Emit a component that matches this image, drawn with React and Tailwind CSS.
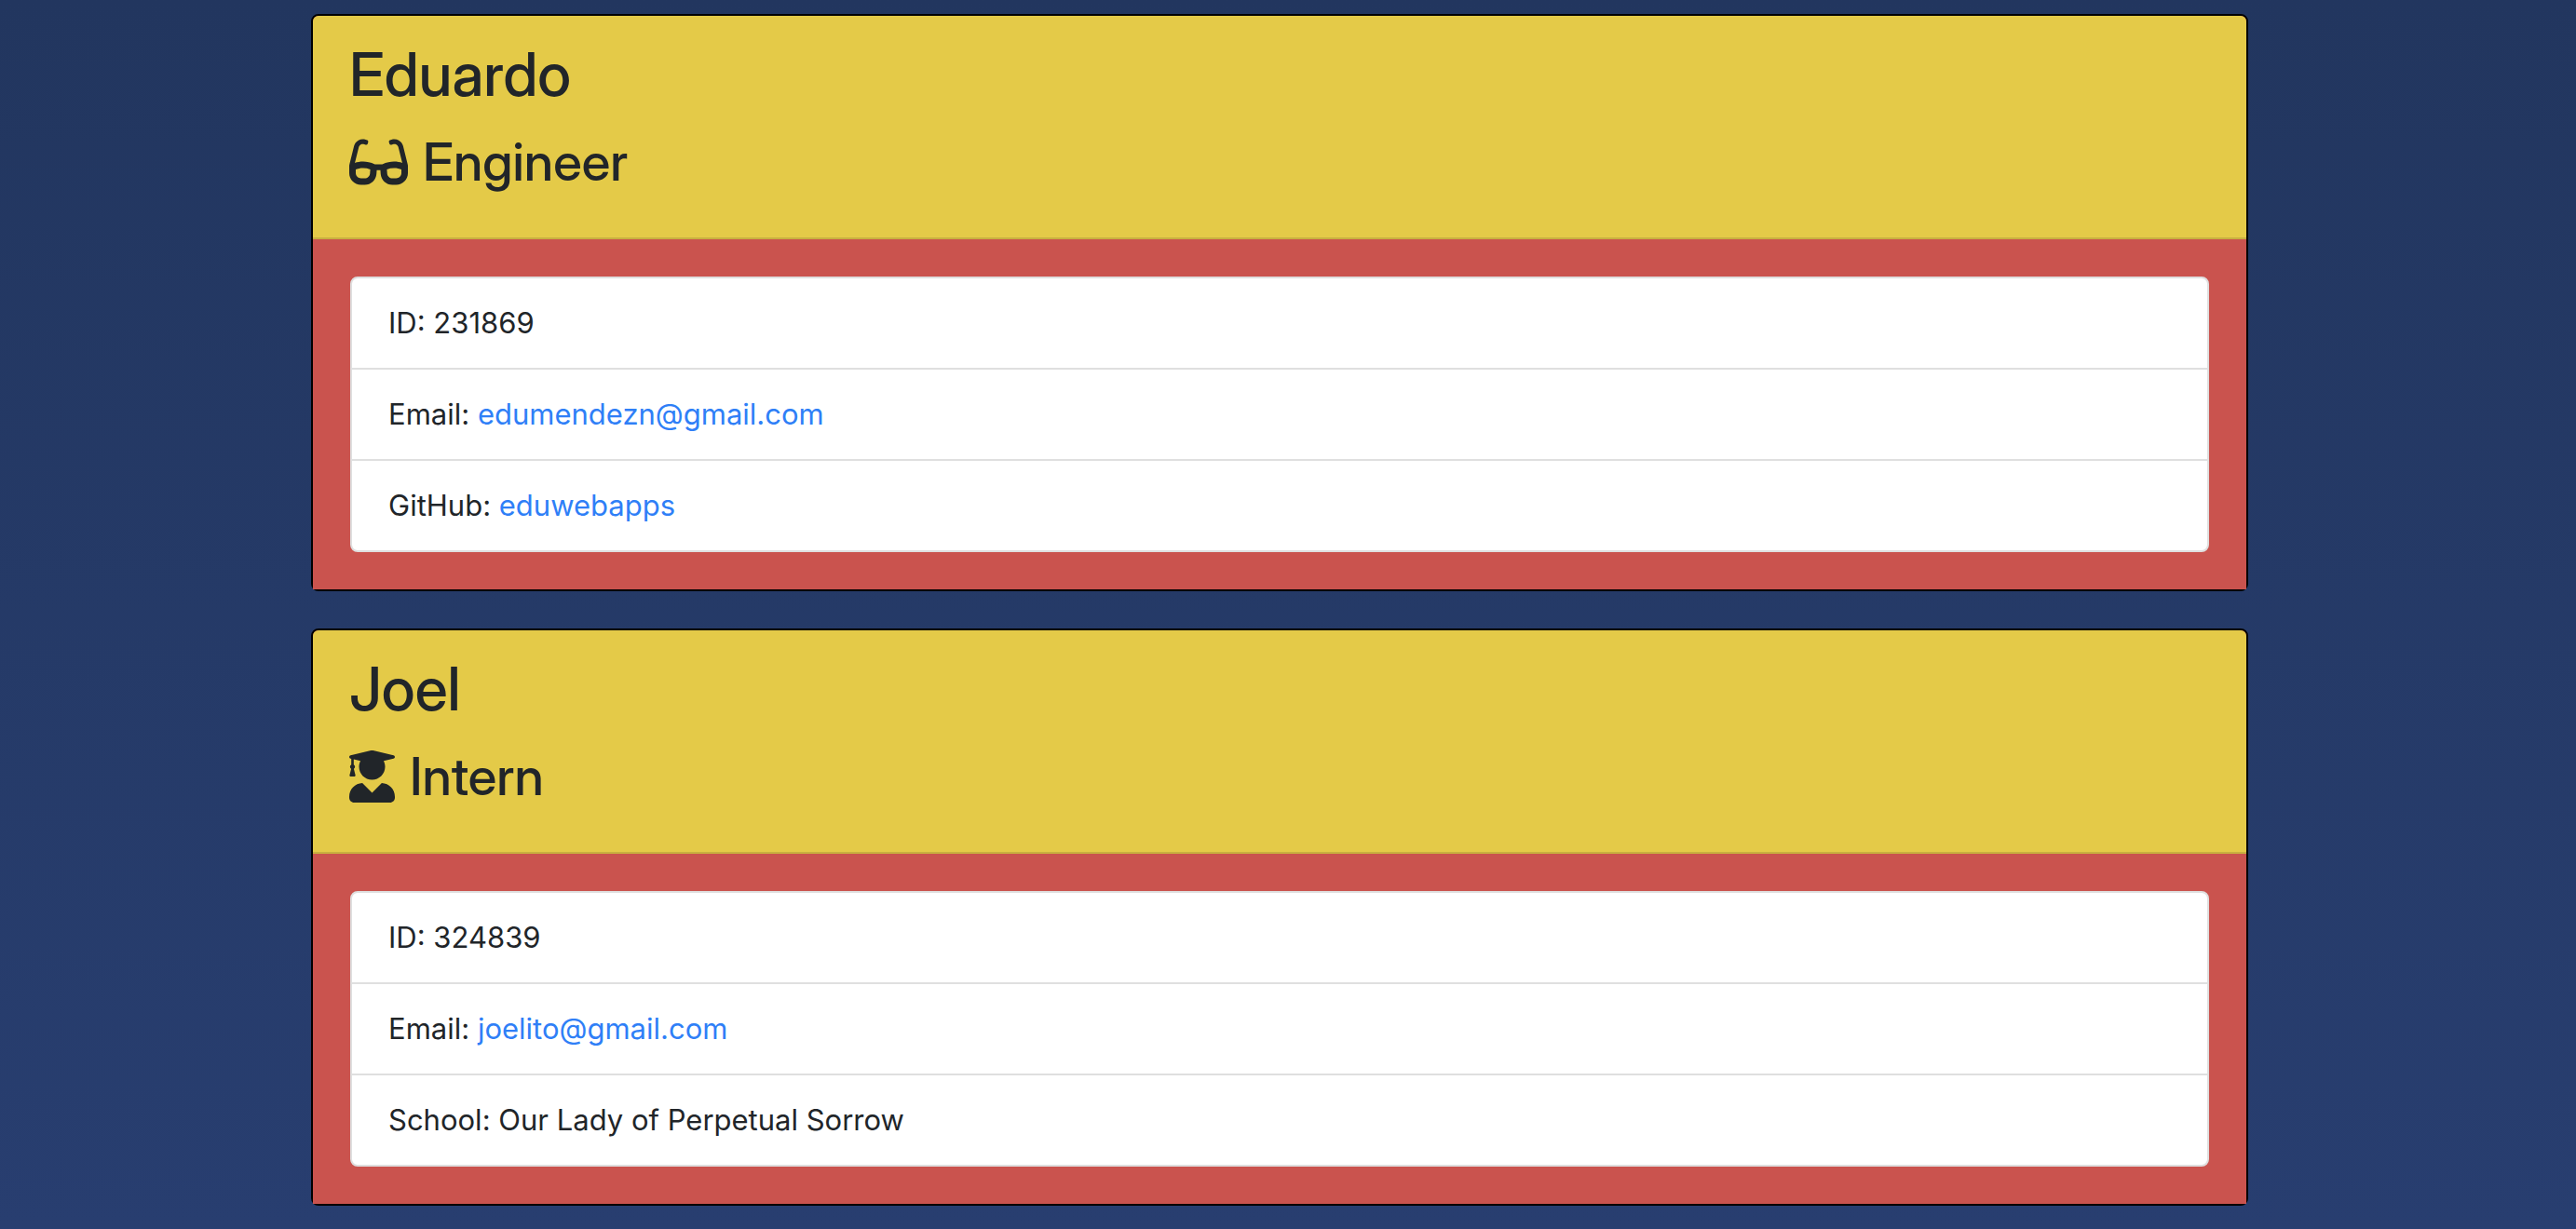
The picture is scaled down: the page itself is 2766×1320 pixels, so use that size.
import { FaGlasses, FaUserGraduate } from "react-icons/fa";

const employees = [
  {
    name: "Eduardo",
    role: "Engineer",
    Icon: FaGlasses,
    iconClass: "h-14 w-[63px]",
    details: [
      { label: "ID", value: "231869" },
      { label: "Email", value: "edumendezn@gmail.com", href: "mailto:edumendezn@gmail.com" },
      { label: "GitHub", value: "eduwebapps", href: "https://github.com/eduwebapps" },
    ],
  },
  {
    name: "Joel",
    role: "Intern",
    Icon: FaUserGraduate,
    iconClass: "h-14 w-[49px]",
    details: [
      { label: "ID", value: "324839" },
      { label: "Email", value: "joelito@gmail.com", href: "mailto:joelito@gmail.com" },
      { label: "School", value: "Our Lady of Perpetual Sorrow" },
    ],
  },
];

function EmployeeCard({ name, role, Icon, iconClass, details }) {
  return (
    <article className="rounded-lg border-2 border-black bg-[#ca534e]">
      <header className="rounded-t-md border-b-2 border-[#c8b03f] bg-[#e4ca48] px-[39px] pt-6 pb-10 font-['Inter_Display','Inter',sans-serif] font-medium">
        <h2 className="mb-3.5 text-[64px] leading-[78px]">{name}</h2>
        <h3 className="flex items-center gap-4 text-[56px] leading-[82px]">
          <Icon className={iconClass} aria-hidden="true" />
          {role}
        </h3>
      </header>
      <div className="bg-[#ca534e] p-10">
        <ul className="divide-y-2 divide-[#dfdfdf] rounded-lg border-2 border-[#dfdfdf] bg-white">
          {details.map(({ label, value, href }) => (
            <li key={label} className="px-[39px] py-6 text-[31px] leading-[48px]">
              {label}:{" "}
              {href ? (
                <a href={href} className="text-[#2f7ff7] hover:underline">
                  {value}
                </a>
              ) : (
                value
              )}
            </li>
          ))}
        </ul>
      </div>
    </article>
  );
}

export default function App() {
  return (
    <main className="min-h-screen bg-linear-to-b from-[#22365f] to-[#283e70] pt-[15px] pr-[18px] font-['Inter',sans-serif] text-[#212529]">
      <div className="mx-auto flex max-w-[2080px] flex-col gap-10">
        {employees.map((employee) => (
          <EmployeeCard key={employee.name} {...employee} />
        ))}
      </div>
    </main>
  );
}
